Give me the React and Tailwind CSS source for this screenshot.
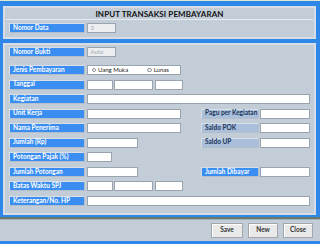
import React from "react";

// Form: Input Transaksi Pembayaran (small desktop-style window)

const Label = ({ children, w = "w-[76px]", tone = "blue" }) => (
  <div
    className={
      (tone === "light"
        ? "bg-[#a9bfdc] text-[#1d3558]"
        : "bg-[#3a8ef2] text-white") +
      " " +
      w +
      " h-full shrink-0 flex items-center pl-[3px] text-[6.5px] font-bold leading-none border border-[#d8dfe7] border-r-[#b4bfcc] border-b-[#b4bfcc]"
    }
  >
    {children}
  </div>
);

const Box = ({ w, children, muted }) => (
  <div
    className={
      w +
      " h-full shrink-0 border border-[#9aa4ae] flex items-center px-[3px] text-[6px] leading-none " +
      (muted ? "bg-[#eceff2] text-[#a2a6aa]" : "bg-white text-[#333]")
    }
  >
    {children}
  </div>
);

const Radio = ({ text }) => (
  <div className="flex items-center gap-[2px]">
    <span className="w-[4.5px] h-[4.5px] rounded-full border border-[#8d949b] bg-white" />
    <span className="text-[6px] text-[#222] leading-none">{text}</span>
  </div>
);

const Row = ({ label, children, right }) => (
  <div className="flex h-[10px] items-stretch">
    <Label>{label}</Label>
    <div className="flex gap-[1.5px] ml-[1.5px]">{children}</div>
    {right && <div className="ml-auto flex items-stretch gap-[1px]">{right}</div>}
  </div>
);

const Button = ({ children, w }) => (
  <button
    className={
      w +
      " h-[15px] bg-[#e9e9e9] border border-[#a3a7ab] text-[6.5px] font-bold text-[#333] leading-none shadow-[inset_1px_1px_0_#ffffff]"
    }
  >
    {children}
  </button>
);

export default function App() {
  return (
    <div className="w-[320px] h-[244px] bg-[#c3cdd8] flex flex-col overflow-hidden font-['Lato','Liberation_Sans',sans-serif]">
      <div className="h-[1px] bg-[#dde8cf]" />

      {/* blue frame with the two panels */}
      <div className="bg-[#2f87ea] pl-[3px] pr-[4px] pt-[5px] pb-[2px] flex flex-col gap-[4px]">
        {/* Header panel */}
        <div className="h-[33px] border-2 border-[#d6dde6] bg-[#c3cdd8] flex flex-col">
          <div className="h-[11px] flex items-center justify-center text-[8px] font-bold text-[#111] tracking-[0.1px]">
            INPUT TRANSAKSI PEMBAYARAN
          </div>
          <div className="h-[1px] bg-[#e6ebf0] mx-[1px]" />
          <div className="mt-[3px] pl-[4px] flex h-[10px] items-stretch">
            <Label>Nomor Data</Label>
            <div className="ml-[1.5px] flex">
              <Box w="w-[29px]" muted>3</Box>
            </div>
          </div>
        </div>

        {/* Main panel */}
        <div className="h-[172px] border-2 border-[#d6dde6] bg-[#c3cdd8] pt-[2px] pl-[4px] pr-[4px] flex flex-col">
          <div className="mb-[8px]">
            <Row label="Nomor Bukti">
              <Box w="w-[29px]" muted>Auto</Box>
            </Row>
          </div>
          <div className="flex flex-col gap-[4.56px]">
            <Row label="Jenis Pembayaran">
              <div className="w-[94px] h-full bg-white border border-[#9aa4ae] flex items-center pl-[4px] gap-[19px]">
                <Radio text="Uang Muka" />
                <Radio text="Lunas" />
              </div>
            </Row>
            <Row label="Tanggal">
              <Box w="w-[26px]" />
              <Box w="w-[39px]" />
              <Box w="w-[28px]" />
            </Row>
            <Row label="Kegiatan">
              <Box w="w-[223px]" />
            </Row>
            <Row
              label="Unit Kerja"
              right={
                <>
                  <Label w="w-[58px]" tone="light">Pagu per Kegiatan</Label>
                  <Box w="w-[50px]" />
                </>
              }
            >
              <Box w="w-[94px]" />
            </Row>
            <Row
              label="Nama Penerima"
              right={
                <>
                  <Label w="w-[58px]" tone="light">Saldo POK</Label>
                  <Box w="w-[50px]" />
                </>
              }
            >
              <Box w="w-[94px]" />
            </Row>
            <Row
              label="Jumlah (Rp)"
              right={
                <>
                  <Label w="w-[58px]" tone="light">Saldo UP</Label>
                  <Box w="w-[50px]" />
                </>
              }
            >
              <Box w="w-[51px]" />
            </Row>
            <Row label="Potongan Pajak (%)">
              <Box w="w-[25px]" />
            </Row>
            <Row
              label="Jumlah Potongan"
              right={
                <>
                  <Label w="w-[58px]">Jumlah Dibayar</Label>
                  <Box w="w-[50px]" />
                </>
              }
            >
              <Box w="w-[51px]" />
            </Row>
            <Row label="Batas Waktu SPJ">
              <Box w="w-[26px]" />
              <Box w="w-[39px]" />
              <Box w="w-[28px]" />
            </Row>
            <Row label="Keterangan/No. HP">
              <Box w="w-[223px]" />
            </Row>
          </div>
        </div>
      </div>

      <div className="h-[3px] bg-[#647b6d] border-b border-[#a5b0ba]" />

      {/* buttons */}
      <div className="flex-1 flex items-center justify-end gap-[5px] pr-[7px]">
        <Button w="w-[32px]">Save</Button>
        <Button w="w-[30px]">New</Button>
        <Button w="w-[30px]">Close</Button>
      </div>

      <div className="h-[3px] bg-[#2f87ea]" />
    </div>
  );
}
